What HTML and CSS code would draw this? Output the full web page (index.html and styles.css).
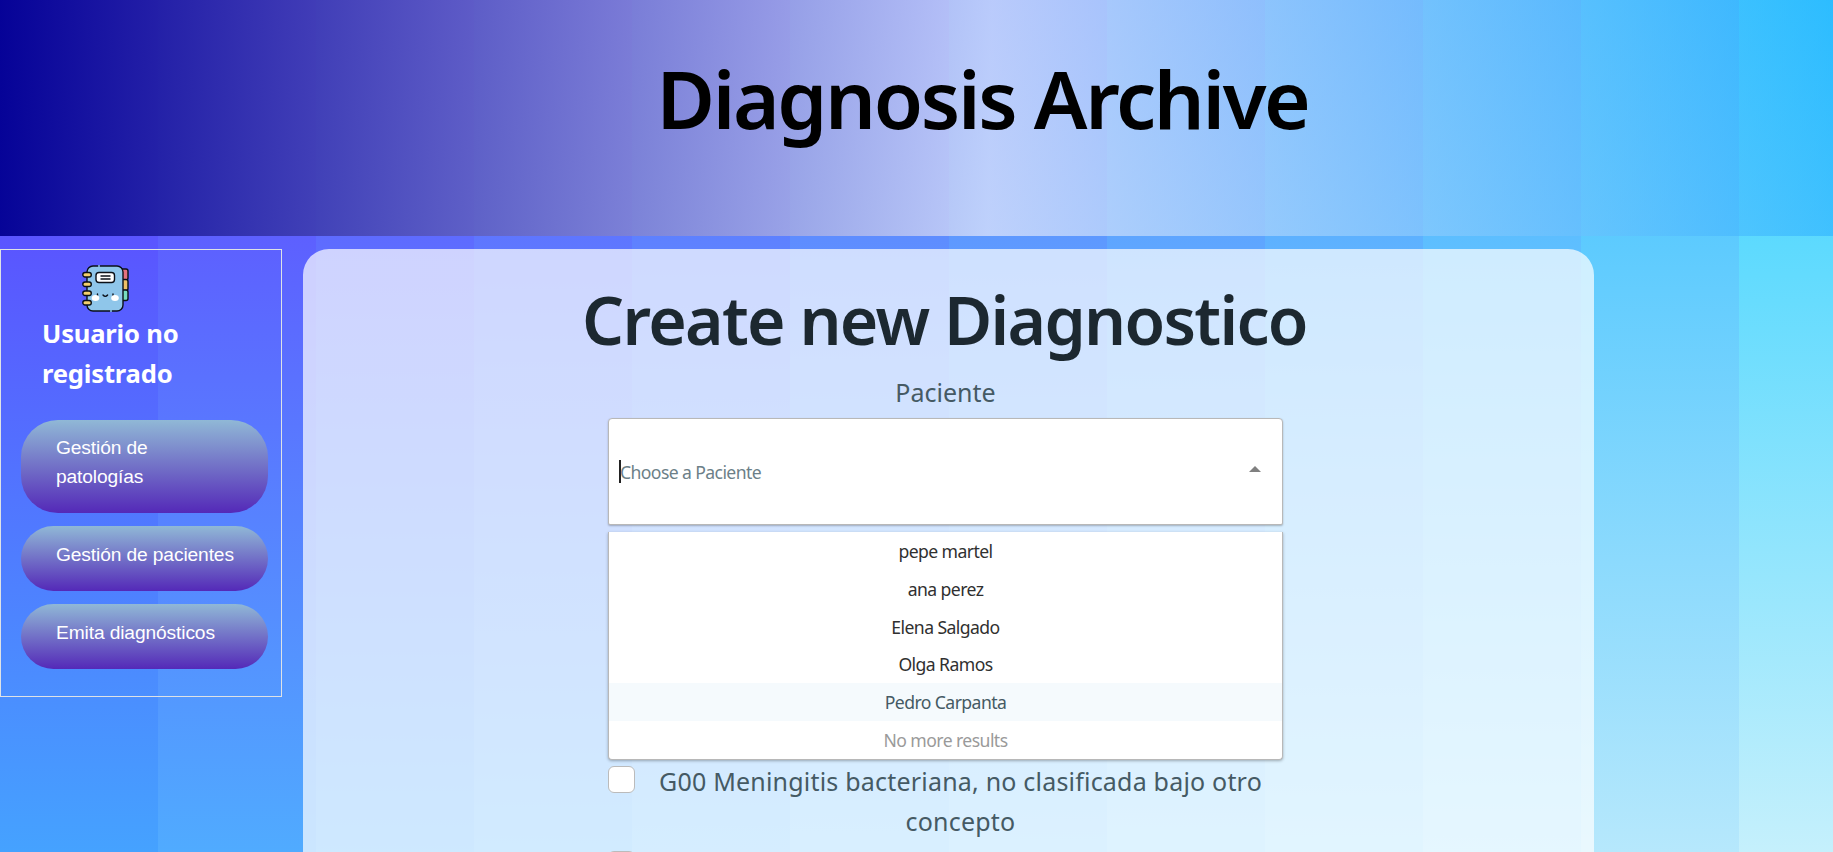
FILE: index.html
```html
<!DOCTYPE html>
<html lang="es">
<head>
<meta charset="utf-8">
<title>Diagnosis Archive</title>
<link rel="stylesheet" href="styles.css">
</head>
<body>
<div class="stripes" aria-hidden="true">
<i class="s1"></i><i class="s2"></i><i class="s3"></i><i class="s4"></i><i class="s5"></i><i class="s6"></i><i class="s7"></i><i class="s8"></i><i class="s9"></i><i class="s10"></i><i class="s11"></i><i class="s12"></i>
</div>
<div class="page">
<header class="banner"><h1 class="banner-title">Diagnosis Archive</h1></header>
<div class="columns">
<aside class="sidebar">
<svg class="notebook" viewBox="0 0 47 47">
<g stroke="#0b1018" stroke-width="1.4">
<rect x="38" y="4" width="8" height="11" rx="2" fill="#e4717f"/>
<rect x="38" y="14.500" width="8" height="11" rx="2" fill="#eebf68"/>
<rect x="38" y="25" width="8" height="10.500" rx="2" fill="#78dcc0"/>
<rect x="5" y="1" width="36" height="45" rx="6" fill="#8fc6ea"/>
<rect x="14" y="7.500" width="18.500" height="10" rx="3" fill="#fff"/>
<path d="M19 11h9M19 14h9" fill="none" stroke-linecap="round"/>
<rect x=".8" y="7.500" width="8.500" height="4.500" rx="2.200" fill="#f4d06c"/>
<rect x=".8" y="17" width="8.500" height="4.500" rx="2.200" fill="#f4d06c"/>
<rect x=".8" y="26" width="8.500" height="4.500" rx="2.200" fill="#f4d06c"/>
<rect x=".8" y="35.500" width="8.500" height="4.500" rx="2.200" fill="#f4d06c"/>
<path d="M15.500 29v2M31 29v2M21 30q2.300 2.800 4.600 0" fill="none" stroke-linecap="round"/>
</g>
<ellipse cx="13.500" cy="33" rx="3.800" ry="3" fill="#fff"/>
<ellipse cx="33" cy="33" rx="3.800" ry="3" fill="#fff"/>
<path d="M16 1h2M28 46h2" stroke="#8fc6ea" stroke-width="1.600"/>
</svg>
<div class="user">Usuario no<br>registrado</div>
<nav class="menu">
<a class="pill">Gestión de patologías</a>
<a class="pill">Gestión de pacientes</a>
<a class="pill">Emita diagnósticos</a>
</nav>
</aside>
<main class="panel">
<h2 class="panel-title">Create new Diagnostico</h2>
<form class="form">
<div class="label">Paciente</div>
<div class="select"><span class="caret"></span><span class="placeholder">Choose a Paciente</span><span class="arrow"></span></div>
<ul class="options">
<li class="option">pepe martel</li>
<li class="option">ana perez</li>
<li class="option">Elena Salgado</li>
<li class="option">Olga Ramos</li>
<li class="option active">Pedro Carpanta</li>
<li class="option muted">No more results</li>
</ul>
<div class="check"><span class="box"></span><div class="check-text">G00 Meningitis bacteriana, no clasificada bajo otro<br>concepto</div></div>
<div class="check"><span class="box"></span></div>
</form>
</main>
</div>
</div>
</body>
</html>
```
FILE: styles.css
```css
* { box-sizing: border-box; }
body { margin: 0; height: 852px; overflow: hidden; font-family: "Noto Sans", "Open Sans", sans-serif; color: #455a64; }
.stripes { position: absolute; inset: 0; display: flex; overflow: hidden; }
.stripes i { flex: 0 0 158.1px; }
.s1 { background: linear-gradient(#6237ff, #45a2ff); }
.s2 { background: linear-gradient(#6243ff, #50abff); }
.s3 { background: linear-gradient(#5f4fff, #5bb4ff); }
.s4 { background: linear-gradient(#5b5bff, #67bcff); }
.s5 { background: linear-gradient(#5667ff, #72c3ff); }
.s6 { background: linear-gradient(#5275ff, #7dcaff); }
.s7 { background: linear-gradient(#4e83ff, #87d0ff); }
.s8 { background: linear-gradient(#4a92ff, #92d7ff); }
.s9 { background: linear-gradient(#45a0ff, #9cddff); }
.s10 { background: linear-gradient(#40b0ff, #a8e3ff); }
.s11 { background: linear-gradient(#3abfff, #b6e8fc); }
.s12 { background: linear-gradient(#34d1ff, #c5f0fc); }
.page { position: relative; height: 852px; overflow: hidden; }
.banner { height: 236px; padding: 43px 0 0 132px; text-align: center; background: linear-gradient(91deg, rgba(2,0,147,.96) 0%, rgba(231,233,250,.7) 54%, rgba(36,168,255,.5) 100%); }
.banner-title { margin: 0; font-size: 80px; line-height: 109px; font-weight: 600; letter-spacing: -2.35px; color: #000; }
.columns { display: flex; align-items: flex-start; gap: 21px; padding-top: 13px; }
.sidebar { width: 282px; height: 448px; border: 1px solid #dee2e6; padding: 15px 13px 0 20px; }
.notebook { display: block; width: 47px; height: 47px; margin-left: 61px; }
.user { margin: 2px 0 0 21px; font-size: 25.6px; line-height: 40px; font-weight: 700; letter-spacing: -.2px; color: #fff; }
.menu { margin-top: 26px; display: flex; flex-direction: column; gap: 13px; }
.pill { display: block; padding: 14px 28px 22px 35px; border-radius: 37px; background: linear-gradient(#90b8d6, #5429b8); font: 19.2px/28.5px "Liberation Sans", sans-serif; letter-spacing: -.12px; color: #fff; }
.pill + .pill { padding: 14.5px 28px 22px 35px; }
.panel { width: 1291px; height: 603px; padding: 25px 8px 0 0; overflow: hidden; border-radius: 26px 26px 0 0; background: rgba(255,255,255,.7); }
.panel-title { margin: 0; text-align: center; font-size: 66px; line-height: 90px; font-weight: 600; letter-spacing: -1.7px; color: #1c2830; white-space: nowrap; }
.form { width: 675px; margin: 8px auto 0; position: relative; left: 1px; }
.label { height: 46px; line-height: 40px; font-size: 25px; text-align: center; }
.select { display: flex; align-items: center; height: 107px; padding: 0 21px 0 10px; background: #fff; border: 1px solid #b8b8b8; border-radius: 4px 4px 2px 2px; box-shadow: 0 1px 2px rgba(0,0,0,.25); font-size: 17.6px; letter-spacing: -.6px; color: #6c7f88; }
.caret { width: 2px; height: 23px; background: #222; margin-top: -1px; }
.placeholder { flex: 1; margin-left: -1px; white-space: nowrap; }
.arrow { border: 6px solid transparent; border-top: 0; border-bottom: 6px solid #808080; margin-top: -6px; }
.options { list-style: none; margin: 7px 0 6px; padding: 0; background: #fff; border: 1px solid #b8b8b8; border-top: 0; border-radius: 0 0 4px 4px; box-shadow: 0 1px 3px rgba(0,0,0,.3); font-size: 17.6px; line-height: 37.8px; letter-spacing: -.57px; color: #303030; text-align: center; }
.option { height: 37.8px; padding-top: 1px; }
.active { background: #f5fafd; color: #455a64; }
.muted { color: #9a9a9a; }
.check { display: flex; height: 85px; }
.box { flex: none; width: 27px; height: 27px; border: 1px solid #bbb; border-radius: 6px; background: #fff; }
.check-text { flex: 1; padding-left: 3px; margin-top: -5px; font-size: 25px; line-height: 40px; letter-spacing: .2px; text-align: center; white-space: nowrap; }
```
